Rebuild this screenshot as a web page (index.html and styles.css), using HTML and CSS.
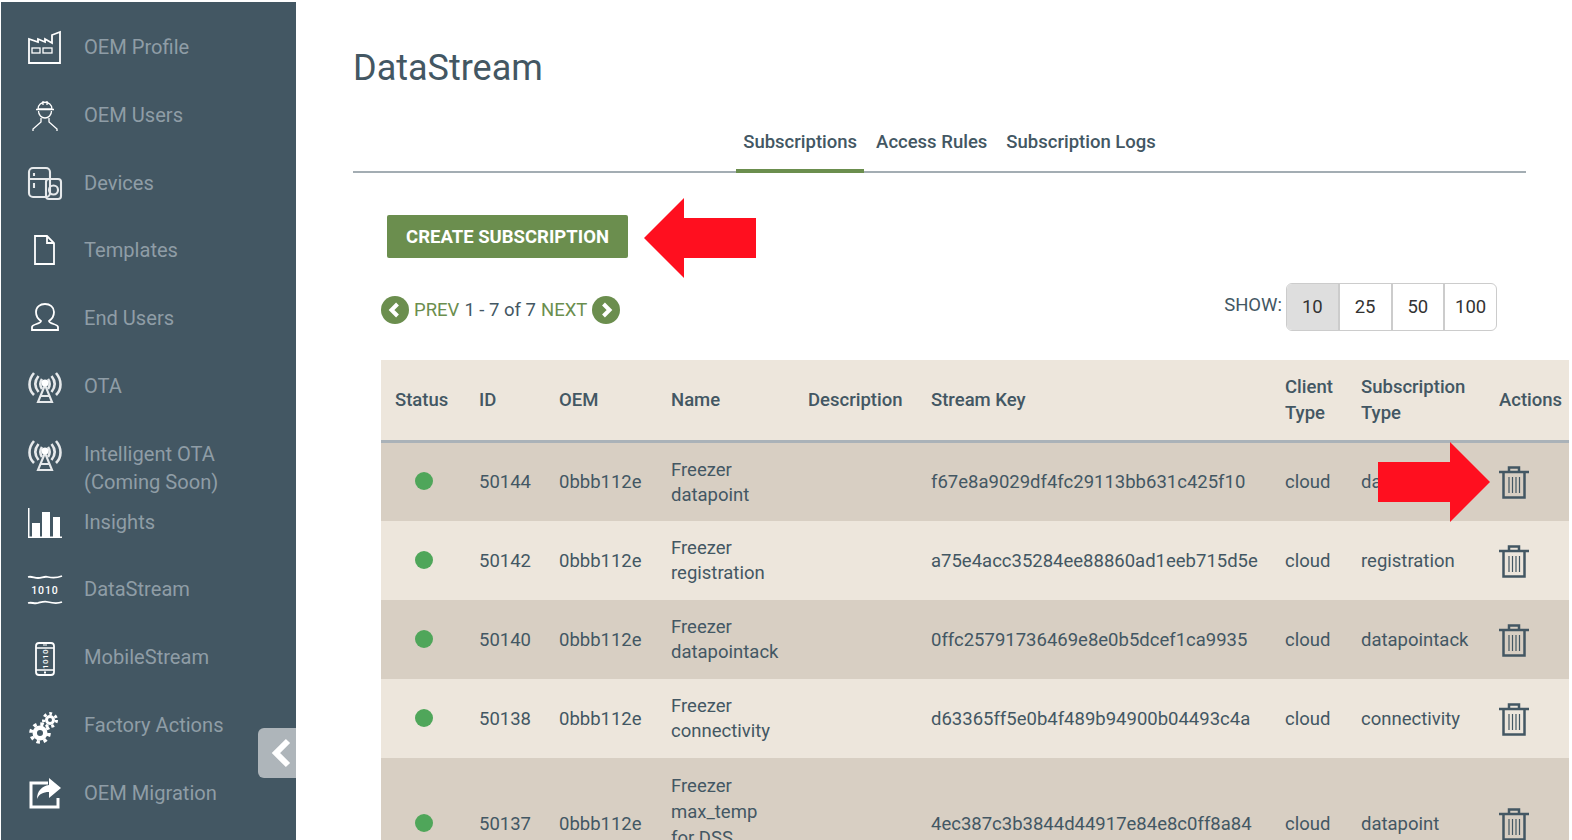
FILE: index.html
```html
<!DOCTYPE html>
<html lang="en">
<head>
    <meta charset="UTF-8">
    <title>DataStream</title>
    <link rel="stylesheet" href="styles.css">
</head>
<body>
    <div class="app">
        <nav class="sidebar">
            <a class="nav-item">
                <svg class="nav-icon" viewBox="0 0 34 34"><path class="line" d="M1 9v24h31V2l-8 3v8l-7-4v3l-7-3v3L1 9z"/><rect class="thin" x="4" y="18" width="8" height="5"/><rect class="thin" x="15" y="18" width="9" height="5"/></svg>
                <span>OEM Profile</span>
            </a>
            <a class="nav-item">
                <svg class="nav-icon" viewBox="0 0 34 34"><path class="thin" d="M10 11c0-9 14-9 14 0zM8 11.500h18M15 3v4M19 3v4M10.500 13c0 4 3 7 6.500 7s6.500-3 6.500-7M13 20v4l-8 7v2M21 20v4l8 7v2"/></svg>
                <span>OEM Users</span>
            </a>
            <a class="nav-item">
                <svg class="nav-icon" viewBox="0 0 34 34"><rect class="bold-line" x="1" y="2" width="21" height="29" rx="4"/><path class="bold-line" d="M1 13h21M6 7v3M6 17v5"/><rect class="bold-line" x="18" y="13" width="15" height="20" rx="3" fill="#435763"/><circle class="bold-line" cx="25.500" cy="24" r="4.500"/></svg>
                <span>Devices</span>
            </a>
            <a class="nav-item">
                <svg class="nav-icon" viewBox="0 0 34 34"><path class="line" d="M7 3h12l7 7v21H7zM19 3v7h7"/></svg>
                <span>Templates</span>
            </a>
            <a class="nav-item">
                <svg class="nav-icon" viewBox="0 0 34 34"><path class="line" d="M4 29v-3c0-3 9-3 9-6-3-2-5-5-5-9 0-5 4-8 9-8s9 3 9 8c0 4-2 7-5 9 0 3 9 3 9 6v3z"/></svg>
                <span>End Users</span>
            </a>
            <a class="nav-item">
                <svg class="nav-icon" viewBox="0 0 34 34"><use href="#antenna"/></svg>
                <span>OTA</span>
            </a>
            <a class="nav-item">
                <svg class="nav-icon" viewBox="0 0 34 34">
                    <g id="antenna">
                        <path class="antenna-arcs" d="M6 4c-6 7-6 16 0 22M28 4c6 7 6 16 0 22M10.500 7c-4 5-4 11 0 16M23.500 7c4 5 4 11 0 16M14 10c-2 3-2 7 0 10M20 10c2 3 2 7 0 10"/>
                        <path class="bold-line" d="M17 16l-7 17h14zM13 27h8"/>
                        <circle cx="17" cy="14" r="3.500" fill="#fff"/>
                    </g>
                </svg>
                <span>Intelligent OTA<br>(Coming Soon)</span>
            </a>
            <a class="nav-item">
                <svg class="nav-icon" viewBox="0 0 34 34"><path class="solid" d="M0 3h1.500v28.500H34V33H0zM4 18h8v13.500H4zM14 7h8v24.500h-8zM25 12h7v19.500h-7z"/></svg>
                <span>Insights</span>
            </a>
            <a class="nav-item">
                <svg class="nav-icon" viewBox="0 0 34 34"><path class="line" d="M0 5c4-1 6 1 10 1s6-2 10-1 9 1 14-1M0 31c4-1 6 1 10 0s6-2 10-1 9 2 14 0"/><text class="icon-digits" x="17" y="22">1010</text></svg>
                <span>DataStream</span>
            </a>
            <a class="nav-item">
                <svg class="nav-icon" viewBox="0 0 34 34"><rect class="line" x="8" y="3" width="18" height="32" rx="3"/><path class="thin" d="M8 8h18M8 30h18"/><path class="solid" d="M15 4.500h4v1h-4zM16 31.500h2v2h-2z"/><text class="icon-digits-up" transform="translate(20 19) rotate(-90)">1010</text></svg>
                <span>MobileStream</span>
            </a>
            <a class="nav-item">
                <svg class="nav-icon" viewBox="0 0 34 34"><circle class="gear" cx="12" cy="25" r="5.250"/><circle class="gear-teeth" cx="12" cy="25" r="9"/><circle class="gear small" cx="22" cy="12" r="3.500"/><circle class="gear-teeth small" cx="22" cy="12" r="6.500"/></svg>
                <span>Factory Actions</span>
            </a>
            <a class="nav-item">
                <svg class="nav-icon" viewBox="0 0 34 34"><path class="heavy" d="M20 7H3v24h27v-9"/><path class="solid" d="M21 2l12 10-12 10v-6c-6 0-10 2-12 7 0-8 5-13 12-14z"/></svg>
                <span>OEM Migration</span>
            </a>
            <div class="collapse-btn">
                <svg width="20" height="30" viewBox="0 0 20 30"><path d="M17 3L5 15l12 12" fill="none" stroke="#fff" stroke-width="6"/></svg>
            </div>
        </nav>

        <main class="content">
            <h1 class="page-title">DataStream</h1>

            <div class="tabs">
                <a class="tab active">Subscriptions</a>
                <a class="tab">Access Rules</a>
                <a class="tab">Subscription Logs</a>
            </div>

            <div class="actions-row">
                <button class="create-btn">CREATE SUBSCRIPTION</button>
            </div>

            <div class="toolbar">
                <div class="pager">
                    <svg class="pager-icon" viewBox="0 0 28 28"><circle cx="14" cy="14" r="14" fill="#6b8e4e"/><path d="M16.500 8l-6 6 6 6" fill="none" stroke="#fff" stroke-width="4"/></svg>
                    <span class="pager-link">PREV</span>
                    <span>1 - 7 of 7</span>
                    <span class="pager-link">NEXT</span>
                    <svg class="pager-icon" viewBox="0 0 28 28"><circle cx="14" cy="14" r="14" fill="#6b8e4e"/><path d="M11.500 8l6 6-6 6" fill="none" stroke="#fff" stroke-width="4"/></svg>
                </div>
                <div class="show">
                    <span class="show-label">SHOW:</span>
                    <div class="show-group">
                        <span class="show-opt selected">10</span>
                        <span class="show-opt">25</span>
                        <span class="show-opt">50</span>
                        <span class="show-opt">100</span>
                    </div>
                </div>
            </div>

            <table class="subs">
                <colgroup>
                    <col class="c-status"><col class="c-id"><col class="c-oem"><col class="c-name"><col class="c-desc"><col class="c-key"><col class="c-client"><col class="c-type"><col class="c-actions">
                </colgroup>
                <thead>
                    <tr>
                        <th>Status</th>
                        <th>ID</th>
                        <th>OEM</th>
                        <th>Name</th>
                        <th>Description</th>
                        <th>Stream Key</th>
                        <th>Client<br>Type</th>
                        <th>Subscription<br>Type</th>
                        <th>Actions</th>
                    </tr>
                </thead>
                <tbody>
                    <tr>
                        <td><span class="dot"></span></td>
                        <td>50144</td>
                        <td>0bbb112e</td>
                        <td>Freezer<br>datapoint</td>
                        <td></td>
                        <td>f67e8a9029df4fc29113bb631c425f10</td>
                        <td>cloud</td>
                        <td>datapoint</td>
                        <td><svg class="trash" viewBox="0 0 30 33"><use href="#trash"/></svg></td>
                    </tr>
                    <tr>
                        <td><span class="dot"></span></td>
                        <td>50142</td>
                        <td>0bbb112e</td>
                        <td>Freezer<br>registration</td>
                        <td></td>
                        <td>a75e4acc35284ee88860ad1eeb715d5e</td>
                        <td>cloud</td>
                        <td>registration</td>
                        <td>
                            <svg class="trash" viewBox="0 0 30 33">
                                <g id="trash" fill="none" stroke="#435763">
                                    <path stroke-width="2.500" d="M0 6h30M10 5V1.500h10V5M4.500 6v25.500h21V6"/>
                                    <path stroke-width="1.200" d="M10 11v16M13.500 11v16M17 11v16M20.500 11v16"/>
                                </g>
                            </svg>
                        </td>
                    </tr>
                    <tr>
                        <td><span class="dot"></span></td>
                        <td>50140</td>
                        <td>0bbb112e</td>
                        <td>Freezer<br>datapointack</td>
                        <td></td>
                        <td>0ffc25791736469e8e0b5dcef1ca9935</td>
                        <td>cloud</td>
                        <td>datapointack</td>
                        <td><svg class="trash" viewBox="0 0 30 33"><use href="#trash"/></svg></td>
                    </tr>
                    <tr>
                        <td><span class="dot"></span></td>
                        <td>50138</td>
                        <td>0bbb112e</td>
                        <td>Freezer<br>connectivity</td>
                        <td></td>
                        <td>d63365ff5e0b4f489b94900b04493c4a</td>
                        <td>cloud</td>
                        <td>connectivity</td>
                        <td><svg class="trash" viewBox="0 0 30 33"><use href="#trash"/></svg></td>
                    </tr>
                    <tr>
                        <td><span class="dot"></span></td>
                        <td>50137</td>
                        <td>0bbb112e</td>
                        <td class="name-tall">Freezer<br>max_temp<br>for DSS</td>
                        <td></td>
                        <td>4ec387c3b3844d44917e84e8c0ff8a84</td>
                        <td>cloud</td>
                        <td>datapoint</td>
                        <td><svg class="trash" viewBox="0 0 30 33"><use href="#trash"/></svg></td>
                    </tr>
                </tbody>
            </table>
        </main>
    </div>

    <svg class="arrow arrow-left" viewBox="0 0 112 80"><path d="M0 40L40 0v20h72v40H40v20z"/></svg>
    <svg class="arrow arrow-right" viewBox="0 0 112 80"><path d="M112 40L72 0v20H0v40h72v20z"/></svg>
</body>
</html>
```

FILE: styles.css
```css
html, body {
    height: 100%;
    overflow: hidden;
}
body {
    margin: 0;
    background: #fff;
    color: #435763;
    font-family: Roboto, "Liberation Sans", sans-serif;
    font-size: 18.500px;
}
.app {
    display: flex;
    padding: 2px 0 0 1px;
    height: 838px;
}

/* sidebar */
.sidebar {
    position: relative;
    flex: 0 0 295px;
    padding-top: 11px;
    background: #435763;
    color: #8f9da6;
    font-size: 20.100px;
}
.nav-item {
    display: flex;
    align-items: flex-start;
    gap: 22px;
    height: 67.800px;
    padding: 20px 0 0 27px;
    box-sizing: border-box;
    line-height: 28px;
}
.nav-item span {
    white-space: nowrap;
}
.nav-icon {
    flex: none;
    width: 34px;
    height: 34px;
    margin-top: -3px;
    overflow: visible;
}
.line, .bold-line, .thin, .heavy, .gear, .gear-teeth, .antenna-arcs {
    fill: none;
    stroke: #fff;
}
.line {
    stroke-width: 1.800;
}
.bold-line {
    stroke-width: 2.100;
    stroke: #e6e9eb;
}
.thin {
    stroke-width: 1.300;
}
.heavy {
    stroke-width: 3;
}
.antenna-arcs {
    stroke-width: 2.600;
    stroke: #e6e9eb;
}
.solid {
    fill: #fff;
}
.gear {
    stroke-width: 4.500;
}
.gear.small {
    stroke-width: 3;
}
.gear-teeth {
    stroke-width: 3.600;
    stroke-dasharray: 3.400 3.670;
}
.gear-teeth.small {
    stroke-width: 3;
    stroke-dasharray: 2.800 3.030;
}
.icon-digits, .icon-digits-up {
    fill: #fff;
    font-family: Roboto, sans-serif;
    font-weight: 500;
    text-anchor: middle;
}
.icon-digits {
    font-size: 10.500px;
    letter-spacing: 0.900px;
}
.icon-digits-up {
    font-size: 8px;
    letter-spacing: 0.400px;
}
.collapse-btn {
    position: absolute;
    right: 0;
    top: 726px;
    display: flex;
    align-items: center;
    justify-content: center;
    width: 38px;
    height: 50px;
    box-sizing: border-box;
    padding-left: 8px;
    border-radius: 6px 0 0 6px;
    background: #aeb5ba;
}

/* main */
.content {
    flex: 1;
    min-width: 0;
    padding-left: 57px;
}
.page-title {
    margin: 0;
    padding-top: 42px;
    font-size: 36px;
    font-weight: 400;
    line-height: 48px;
}
.tabs {
    display: flex;
    justify-content: center;
    width: 1153px;
    padding-left: 20px;
    margin-top: 27px;
    border-bottom: 2px solid #a3adb3;
}
.tab {
    height: 54px;
    box-sizing: border-box;
    padding: 0 7px;
    margin: 0 2.500px -2px;
    font-weight: 500;
    line-height: 46px;
}
.tab.active {
    border-bottom: 4px solid #6b8e4e;
}
.actions-row {
    padding: 42px 0 0 34px;
}
.create-btn {
    display: block;
    width: 241px;
    height: 43px;
    border: 0;
    border-radius: 2px;
    background: #6b8e4e;
    color: #fff;
    font: 700 18.500px Roboto, sans-serif;
}
.toolbar {
    display: flex;
    justify-content: space-between;
    align-items: flex-start;
    width: 1116px;
    margin: 25px 0 0 28px;
}
.pager {
    display: flex;
    align-items: center;
    gap: 5px;
    height: 28px;
    margin-top: 13px;
}
.pager-icon {
    width: 28px;
    height: 28px;
}
.pager-link {
    color: #6b8e4e;
}
.show {
    display: flex;
    align-items: flex-start;
    gap: 4px;
}
.show-label {
    padding-top: 10px;
    line-height: 24px;
}
.show-group {
    display: flex;
    height: 48px;
    box-sizing: border-box;
    border: 1px solid #ccc;
    border-radius: 6px;
    overflow: hidden;
    color: #333;
}
.show-opt {
    width: 50.750px;
    border-right: 2px solid #ccc;
    text-align: center;
    line-height: 46px;
}
.show-opt:last-child {
    border-right: 0;
}
.show-opt.selected {
    background: #dedede;
}

/* table */
.subs {
    table-layout: fixed;
    width: 1188px;
    margin: 29px 0 0 28px;
    border-collapse: collapse;
    line-height: 26px;
}
.c-status { width: 84px; }
.c-id { width: 80px; }
.c-oem { width: 112px; }
.c-name { width: 137px; }
.c-desc { width: 123px; }
.c-key { width: 354px; }
.c-client { width: 76px; }
.c-type { width: 138px; }
.c-actions { width: 84px; }
.subs th {
    height: 80px;
    padding: 0 0 0 14px;
    background: #ede6dc;
    border-bottom: 3px solid #aab2b8;
    font-weight: 500;
    text-align: left;
}
.subs td {
    height: 79px;
    box-sizing: border-box;
    padding: 14.500px 0 13.500px 14px;
    line-height: 25px;
    white-space: nowrap;
    background: #ede6dc;
}
.subs tbody tr:nth-child(odd) td {
    background: #d8cfc3;
}
.subs td.name-tall {
    padding-top: 14.500px;
    padding-bottom: 40px;
    line-height: 26px;
}
.dot {
    display: block;
    width: 18px;
    height: 18px;
    margin: 0 0 3px 20px;
    border-radius: 50%;
    background: #4fa65a;
}
.trash {
    display: block;
    width: 30px;
    height: 33px;
}

/* callouts pasted over the page */
.arrow {
    position: absolute;
    fill: #ff0f1f;
}
.arrow-left {
    left: 644px;
    top: 198px;
    width: 112px;
    height: 80px;
}
.arrow-right {
    left: 1378px;
    top: 442px;
    width: 112px;
    height: 80px;
}
```
